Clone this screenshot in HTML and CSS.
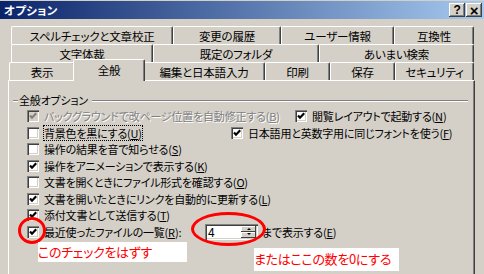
FILE: index.html
```html
<!DOCTYPE html>
<html lang="ja">
<head>
    <meta charset="UTF-8">
    <title>オプション</title>
    <link rel="stylesheet" href="styles.css">
</head>
<body>
    <div class="window">
        <div class="titlebar">
            <span class="title">オプション</span>
            <div class="tb-buttons">
                <span class="tb-btn">?</span>
                <span class="tb-btn x">×</span>
            </div>
        </div>

        <div class="tabs">
            <div class="tab-row row-back">
                <div class="tab t-spell">スペルチェックと文章校正</div>
                <div class="tab t-track">変更の履歴</div>
                <div class="tab t-user">ユーザー情報</div>
                <div class="tab t-compat">互換性</div>
            </div>
            <div class="tab-row row-back">
                <div class="tab t-layout">文字体裁</div>
                <div class="tab t-folder">既定のフォルダ</div>
                <div class="tab t-fuzzy">あいまい検索</div>
            </div>
            <div class="tab-row row-front">
                <div class="tab t-view">表示</div>
                <div class="tab t-general active">全般</div>
                <div class="tab t-edit">編集と日本語入力</div>
                <div class="tab t-print">印刷</div>
                <div class="tab t-save">保存</div>
                <div class="tab t-sec">セキュリティ</div>
            </div>
        </div>

        <div class="page">
            <div class="group">
                <div class="group-title"><span>全般オプション</span></div>

                <div class="opt-row">
                    <label class="opt disabled w-first"><span class="cb checked"></span>バックグラウンドで改ページ位置を自動修正する(<u>B</u>)</label>
                    <label class="opt"><span class="cb checked"></span>閲覧レイアウトで起動する(<u>N</u>)</label>
                </div>
                <div class="opt-row">
                    <label class="opt w-second"><span class="cb"></span><span class="focus">背景色を黒にする(<u>U</u>)</span></label>
                    <label class="opt"><span class="cb checked"></span>日本語用と英数字用に同じフォントを使う(<u>F</u>)</label>
                </div>
                <div class="opt-row">
                    <label class="opt"><span class="cb"></span>操作の結果を音で知らせる(<u>S</u>)</label>
                </div>
                <div class="opt-row">
                    <label class="opt"><span class="cb checked"></span>操作をアニメーションで表示する(<u>K</u>)</label>
                </div>
                <div class="opt-row">
                    <label class="opt"><span class="cb"></span>文書を開くときにファイル形式を確認する(<u>O</u>)</label>
                </div>
                <div class="opt-row">
                    <label class="opt"><span class="cb checked"></span>文書を開いたときにリンクを自動的に更新する(<u>L</u>)</label>
                </div>
                <div class="opt-row">
                    <label class="opt"><span class="cb checked"></span>添付文書として送信する(<u>T</u>)</label>
                </div>
                <div class="opt-row">
                    <label class="opt w-recent"><span class="cb checked"></span>最近使ったファイルの一覧(<u>R</u>):</label>
                    <div class="spin">
                        <span class="spin-value">4</span>
                        <div class="spin-btns">
                            <span class="spin-btn up"></span>
                            <span class="spin-btn down"></span>
                        </div>
                    </div>
                    <span class="after-spin">まで表示する(<u>E</u>)</span>
                </div>
            </div>
        </div>

        <!-- annotations drawn over the dialog -->
        <div class="ring ring-check"></div>
        <div class="ring ring-spin"></div>
        <div class="note note-check">このチェックをはずす</div>
        <div class="note note-spin">またはここの数を0にする</div>
    </div>
</body>
</html>
```

FILE: styles.css
```css
body { margin: 0; font-family: "Noto Sans CJK JP", sans-serif; font-size: 11px; letter-spacing: -0.2px; font-feature-settings: "palt"; color: #000; }
.window { position: relative; width: 484px; height: 274px; background: #d4d0c8; overflow: hidden; }

.titlebar { height: 18px; margin-top: 1px; display: flex; align-items: center; justify-content: space-between; padding: 0 2px 0 4px; background: linear-gradient(to right, #0a246a, #a6caf0); }
.title { color: #fff; font-weight: bold; font-size: 11.5px; letter-spacing: 0.3px; }
.tb-buttons { display: flex; gap: 1px; }
.tb-btn { width: 16px; height: 14px; display: flex; align-items: center; justify-content: center; background: #d4d0c8; font-family: "Liberation Sans", sans-serif; font-weight: bold; font-size: 12px; line-height: 1; box-shadow: inset -1px -1px #404040, inset 1px 1px #fff, inset -2px -2px #808080; }
.tb-btn.x { font-size: 15px; }

.tabs { padding-top: 7px; }
.tab-row { display: flex; height: 18px; }
.row-back { margin-left: 11px; }
.row-front { margin-left: 9px; }
.tab { height: 18px; box-sizing: border-box; display: flex; align-items: center; justify-content: center; border-top: 1px solid #fff; border-left: 1px solid #fff; border-right: 1px solid #404040; border-radius: 2px 2px 0 0; box-shadow: inset -1px 0 #808080; background: #d4d0c8; font-size: 11.5px; }
.tab.active { position: relative; z-index: 2; height: 22px; margin: -3px -2px 0; padding-bottom: 2px; }

.t-spell { width: 162px; }
.t-track { width: 108px; }
.t-user { width: 113px; }
.t-compat { width: 80px; }
.t-layout { width: 142px; }
.t-folder { width: 166px; }
.t-fuzzy { width: 155px; }
.t-view { width: 66px; }
.t-general { width: 72px; }
.t-edit { width: 122px; }
.t-print { width: 65px; }
.t-save { width: 65px; }
.t-sec { width: 79px; }

.page { position: relative; z-index: 1; margin-left: 8px; width: 467px; height: 200px; box-sizing: border-box; border-top: 1px solid #fff; border-left: 1px solid #fff; border-right: 1px solid #404040; box-shadow: inset -1px 0 #808080; padding: 12px 6px 0 4px; }

.group { border-top: 1px solid #808080; box-shadow: 0 1px 0 #fff inset; margin-top: 7px; }
.group-title { margin-top: -9px; height: 16px; padding-left: 5px; }
.group-title span { background: #d4d0c8; padding: 0 4px 0 1px; line-height: 16px; }

.opt-row { display: flex; align-items: center; height: 16.5px; padding-left: 14px; }
.opt { display: flex; align-items: center; white-space: nowrap; line-height: 14px; }
.opt.disabled { color: #808080; text-shadow: 1px 1px 0 #fff; }
.w-first { width: 268px; }
.w-second { width: 204px; }
.w-recent { width: 178px; }

.cb { width: 12px; height: 12px; box-sizing: border-box; margin-right: 5px; background: #fff; box-shadow: inset 1px 1px #808080, inset 2px 2px #404040, inset -1px -1px #fff, inset -2px -2px #d4d0c8; flex: none; }
.cb.checked { background: #fff url("data:image/svg+xml,%3Csvg xmlns='http://www.w3.org/2000/svg' width='12' height='12'%3E%3Cpath d='M3 5.5 L5 7.7 L9.2 3.3' fill='none' stroke='%23000' stroke-width='2.2'/%3E%3C/svg%3E") no-repeat; }
.disabled .cb { background-color: #d4d0c8; }
.disabled .cb.checked { background: #d4d0c8 url("data:image/svg+xml,%3Csvg xmlns='http://www.w3.org/2000/svg' width='12' height='12'%3E%3Cpath d='M3 5.5 L5 7.7 L9.2 3.3' fill='none' stroke='%23808080' stroke-width='2.2'/%3E%3C/svg%3E") no-repeat; }
.focus { outline: 1px dotted #000; outline-offset: 0; }

.spin { display: flex; align-items: center; width: 53px; height: 16px; box-sizing: border-box; background: #fff; box-shadow: inset 1px 1px #808080, inset 2px 2px #404040, inset -1px -1px #fff, inset -2px -2px #d4d0c8; padding: 2px 2px 2px 3px; }
.spin-value { flex: 1; line-height: 12px; font-size: 12px; }
.spin-btns { display: flex; flex-direction: column; width: 15px; height: 12px; }
.spin-btn { flex: 1; position: relative; background: #d4d0c8; box-shadow: inset -1px -1px #404040, inset 1px 1px #fff; }
.spin-btn::after { content: ""; position: absolute; left: 6px; border-left: 2px solid transparent; border-right: 2px solid transparent; }
.spin-btn.up::after { top: 2px; border-bottom: 2px solid #000; }
.spin-btn.down::after { top: 1px; border-top: 2px solid #000; }
.after-spin { margin-left: 4px; white-space: nowrap; }

.ring { position: absolute; z-index: 5; border: 3px solid #f00; border-radius: 50%; box-sizing: border-box; }
.ring-check { left: 18px; top: 217px; width: 28px; height: 27px; }
.ring-spin { left: 191px; top: 212px; width: 75px; height: 34px; }
.note { position: absolute; z-index: 5; background: #fff; color: #f00; font-size: 13px; letter-spacing: -0.3px; line-height: 20px; }
.note-check { left: 38px; top: 242px; width: 149px; height: 20px; }
.note-spin { left: 254px; top: 248px; width: 145px; height: 23px; line-height: 22px; }
```
